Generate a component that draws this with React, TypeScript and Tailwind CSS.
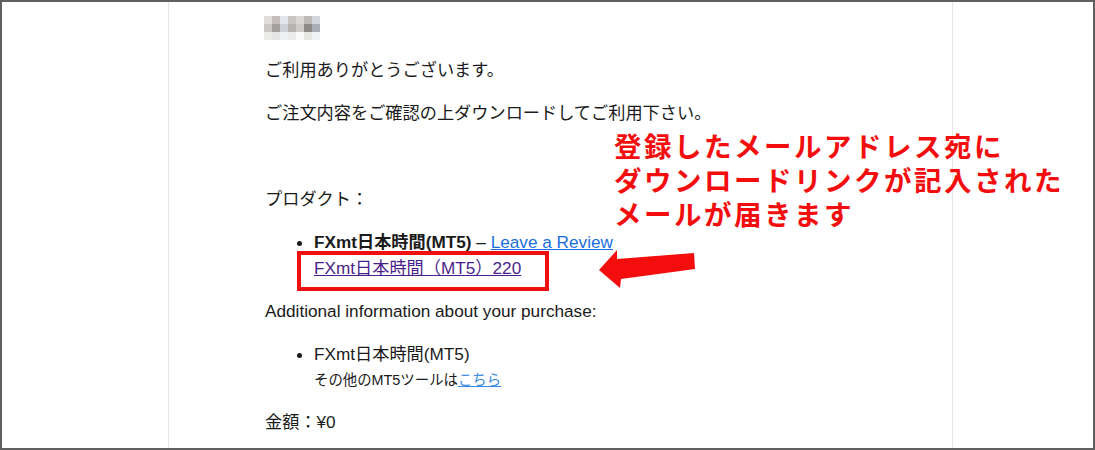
import React from "react";

const mosaic = [
  ["#e0dfdc", "#c4bfbc", "#e3e6ea", "#c8c6c4", "#dad7d5", "#bcb9b7", "#d3d7dc"],
  ["#cbc9c6", "#a39f9c", "#cfd3d8", "#b6b4b3", "#cfcbc8", "#8e8a88", "#a9afb7"],
  ["#ebebea", "#e5e5e5", "#eef0f2", "#ececec", "#fafafa", "#e6e6e5", "#f0f1f3"],
];

export default function App() {
  return (
    <div
      className="relative w-[1095px] h-[450px] overflow-hidden border-2 border-[#5f5f5f] bg-white flex text-[#1a1a1a]"
      style={{ fontFamily: '"Liberation Sans", "Noto Sans CJK JP", sans-serif' }}
    >
      <div className="w-[166px] shrink-0" />
      <div className="w-[785px] shrink-0 border-x border-[#e6e6e6] pl-[96px] pt-[14px] text-[17.2px] leading-[26px]">
        <div className="grid grid-cols-[repeat(7,8px)] grid-rows-[repeat(3,8px)] w-[56px] h-[24px] mb-[17px] -ml-[1px]">
          {mosaic.flat().map((c, i) => (
            <div key={i} style={{ backgroundColor: c }} />
          ))}
        </div>
        <p className="mb-[17px]">ご利用ありがとうございます。</p>
        <p className="mb-[17px]">ご注文内容をご確認の上ダウンロードしてご利用下さい。</p>
        <p className="mb-[17px] h-[26px]"></p>
        <p className="mb-[17px]">プロダクト：</p>
        <ul className="mb-[17px] pl-[49px] list-disc">
          <li>
            <span className="font-bold">FXmt日本時間(MT5)</span> –{" "}
            <a className="text-[#1a6fdc] underline">Leave a Review</a>
            <br />
            <a className="text-[#4a1f8c] underline">FXmt日本時間（MT5）220</a>
          </li>
        </ul>
        <p className="mb-[17px]">Additional information about your purchase:</p>
        <ul className="mb-[15px] pl-[49px] list-disc">
          <li>
            FXmt日本時間(MT5)
            <div className="text-[14.4px] leading-[27px]">
              その他のMT5ツールは<a className="text-[#3a8ae6] underline">こちら</a>
            </div>
          </li>
        </ul>
        <p>金額：¥0</p>
      </div>
      <div className="flex-1" />

      {/* red highlight box */}
      <div className="absolute left-[295px] top-[249px] w-[252px] h-[40px] border-[4px] border-[#f01010]" />

      {/* arrow */}
      <svg className="absolute left-[590px] top-[240px]" width="110" height="55" viewBox="590 240 110 55">
        <polygon
          points="597,268 615,248 615,257 692,251 693,267 619,277 618,286"
          fill="#f40d0d"
        />
      </svg>

      {/* annotation */}
      <div
        className="absolute left-[612px] top-[126px] text-[27.5px] leading-[34px] font-bold text-[#f40d0d] tracking-[2.5px] whitespace-nowrap"
        style={{ fontFamily: '"Noto Sans CJK JP", sans-serif' }}
      >
        <div>登録したメールアドレス宛に</div>
        <div>ダウンロードリンクが記入された</div>
        <div>メールが届きます</div>
      </div>
    </div>
  );
}
